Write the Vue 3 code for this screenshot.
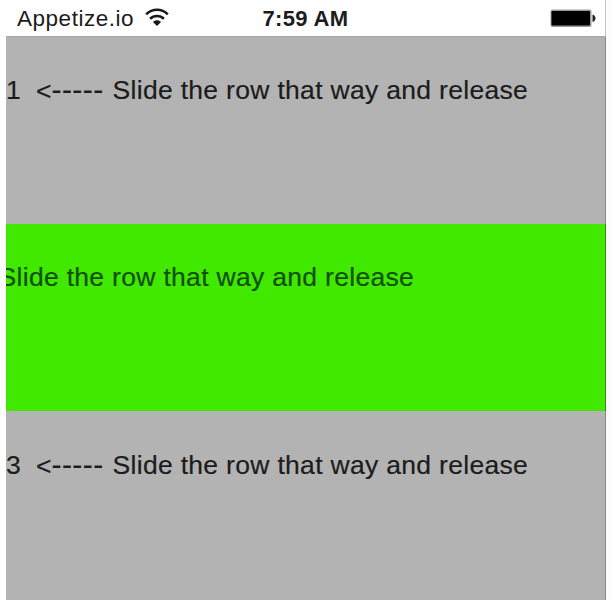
<script setup>
const message = 'Slide the row that way and release'
const rows = [
  { id: 1, swiped: false },
  { id: 2, swiped: true },
  { id: 3, swiped: false },
]
</script>

<template>
  <main class="phone">
    <header class="status">
      <div class="carrier">
        <span class="name">Appetize.io</span>
        <svg class="wifi" viewBox="0 0 24 18" width="24" height="18" fill="none" stroke="#171717">
          <path d="M1.2 6.3C7.4.2 16.6.2 22.8 6.3" stroke-width="2.5" />
          <path d="M5.1 10.8C9 7 15 7 18.9 10.8" stroke-width="2.6" />
          <path d="M12 18 8 14C10.2 11.6 13.8 11.6 16 14Z" fill="#171717" stroke="none" />
        </svg>
      </div>
      <time class="time">7:59 AM</time>
      <svg class="battery" viewBox="0 0 47 19" width="47" height="19">
        <rect x=".5" y=".5" width="41" height="17.5" rx="2" fill="#999" />
        <rect x="1.5" y="2" width="38.5" height="14.5" rx="1" fill="#000" />
        <path d="M42.5 5.5Q45.5 6.5 45.5 9.2T42.5 13Z" fill="#222" />
      </svg>
    </header>
    <section class="list">
      <div v-for="row in rows" :key="row.id" class="row" :class="{ swiped: row.swiped }">
        <template v-if="!row.swiped">
          <span class="number">{{ row.id }}</span>
          <span class="arrow">&lt;<span class="shaft">-----</span></span>
        </template>
        <span class="message">{{ message }}</span>
      </div>
    </section>
  </main>
</template>

<style>
body {
  background: #fcfcfc;
  overflow: hidden;
}
</style>

<style scoped>
.phone {
  box-sizing: border-box;
  width: 606px;
  height: 600px;
  padding-left: 6px;
  overflow: hidden;
  color: #1c1c1c;
  font-family: "Liberation Sans", Arial, sans-serif;
  background: #fefefe;
}
.status {
  display: grid;
  grid-template-columns: 1fr 90px 1fr;
  align-items: center;
  height: 36px;
  border-right: 1px solid #c4c4c4;
}
.carrier {
  display: flex;
  align-items: center;
  padding-left: 11px;
}
.name {
  width: 117px;
  margin-right: 11px;
  font-size: 22.5px;
  line-height: 37px;
  letter-spacing: 0.53px;
  white-space: nowrap;
}
.wifi {
  margin-bottom: 3px;
}
.time {
  justify-self: center;
  font-size: 22px;
  font-weight: bold;
  line-height: 37px;
  letter-spacing: 0.35px;
  white-space: nowrap;
}
.battery {
  justify-self: end;
  margin-right: 8px;
}
.list {
  border-top: 1px solid #a6a6a6;
}
.row {
  box-sizing: border-box;
  display: flex;
  height: 187px;
  padding-top: 38px;
  overflow: hidden;
  font-size: 26.5px;
  line-height: 30px;
  white-space: nowrap;
  background: #b3b3b3;
  border-right: 1px solid #888;
  -webkit-text-stroke: 0.2px currentColor;
}
.row:last-child {
  height: 190px;
  padding-top: 39px;
}
.number {
  width: 30px;
}
.arrow {
  width: 76.5px;
}
.shaft {
  font-size: 30px;
  line-height: 1;
  letter-spacing: 0.45px;
}
.message {
  letter-spacing: 0.31px;
}
.swiped {
  color: #104f05;
  background: #41e900;
  border-right-color: #269b08;
}
.swiped .message {
  margin-left: -7.5px;
}
</style>
